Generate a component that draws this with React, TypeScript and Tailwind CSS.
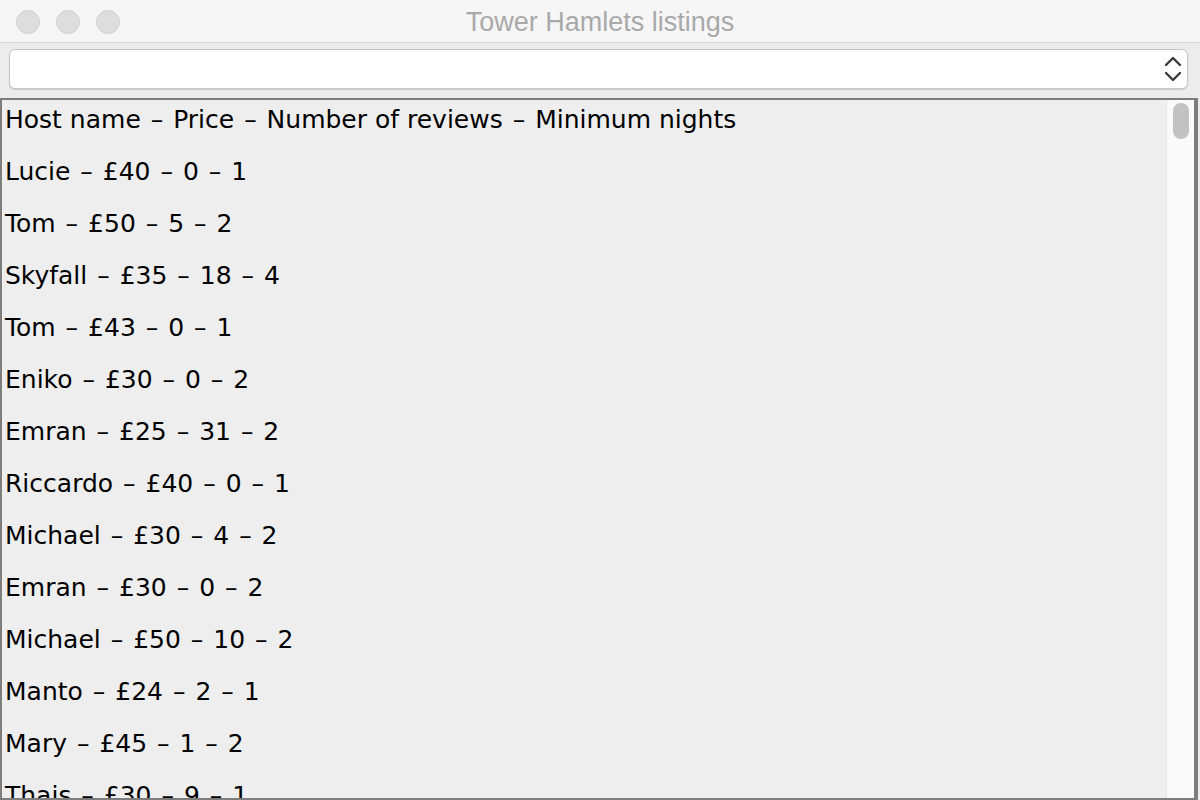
import React from 'react';

const rows = [
    'Host name – Price – Number of reviews – Minimum nights',
    'Lucie – £40 – 0 – 1',
    'Tom – £50 – 5 – 2',
    'Skyfall – £35 – 18 – 4',
    'Tom – £43 – 0 – 1',
    'Eniko – £30 – 0 – 2',
    'Emran – £25 – 31 – 2',
    'Riccardo – £40 – 0 – 1',
    'Michael – £30 – 4 – 2',
    'Emran – £30 – 0 – 2',
    'Michael – £50 – 10 – 2',
    'Manto – £24 – 2 – 1',
    'Mary – £45 – 1 – 2',
    'Thais – £30 – 9 – 1',
    'Anna – £35 – 3 – 2',
];

const Row: React.FC<{ text: string }> = ({ text }) => {
    const parts = text.split(' – ');
    return (
        <div className="h-[52px] leading-[40px] whitespace-pre">
            {parts.map((p, i) => (
                <React.Fragment key={i}>
                    {i > 0 && <span className="px-[2px]"> – </span>}
                    {p}
                </React.Fragment>
            ))}
        </div>
    );
};

const App: React.FC = () => {
    return (
        <div className="w-[1200px] h-[800px] flex flex-col bg-[#ececec] overflow-hidden">
            {/* title bar */}
            <div className="relative h-[43px] shrink-0 bg-[#f6f6f6] border-b border-[#d4d4d4] flex items-center justify-center">
                <div className="absolute left-[16px] top-[10px] flex gap-[16px]">
                    <span className="w-[24px] h-[24px] rounded-full bg-[#dddddd] border border-[#d0d0d0]" />
                    <span className="w-[24px] h-[24px] rounded-full bg-[#dddddd] border border-[#d0d0d0]" />
                    <span className="w-[24px] h-[24px] rounded-full bg-[#dddddd] border border-[#d0d0d0]" />
                </div>
                <span className="mt-[3px] text-[27px] leading-none text-[#a9a9a9] font-['Liberation_Sans',sans-serif]">Tower Hamlets listings</span>
            </div>

            {/* combo box */}
            <div className="px-[9px] pt-[6px] pb-[9px] shrink-0">
                <div className="h-[40px] w-[1179px] bg-white rounded-[6px] border border-[#c6c6c6] shadow-[0_1px_1px_rgba(0,0,0,0.15)] flex items-center justify-end pr-[4px]">
                    <svg width="20" height="32" viewBox="0 0 20 32" fill="none" stroke="#3a3a3a" strokeWidth="2.4" strokeLinecap="round" strokeLinejoin="round">
                        <path d="M3 12 L10 5 L17 12" />
                        <path d="M3 20 L10 27 L17 20" />
                    </svg>
                </div>
            </div>

            {/* list */}
            <div className="flex-1 min-h-0 flex border-2 border-[#7d7d7d] border-r-[4px] mr-[2px] bg-[#eeeeee]">
                <div className="flex-1 overflow-hidden pl-[3px] font-['DejaVu_Sans',sans-serif] text-[25px] text-black">
                    {rows.map((r, i) => (
                        <Row key={i} text={r} />
                    ))}
                </div>
                <div className="w-[28px] shrink-0 bg-[#fafafa] border-l border-[#e6e6e6] pt-[3px] pl-[6px]">
                    <div className="w-[16px] h-[36px] rounded-full bg-[#c2c2c2]" />
                </div>
            </div>
        </div>
    );
};

export default App;
